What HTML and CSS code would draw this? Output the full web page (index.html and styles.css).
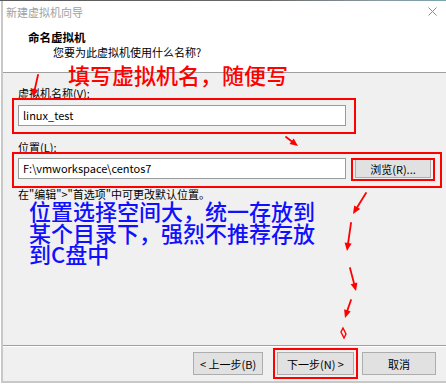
FILE: index.html
```html
<!DOCTYPE html>
<html lang="zh-CN">
<head>
<meta charset="utf-8">
<title>新建虚拟机向导</title>
<link rel="stylesheet" href="styles.css">
</head>
<body>
<div class="window">
  <div class="topstrip"></div>
  <div class="frame">
    <div class="titlebar">
      <span class="title">新建虚拟机向导</span>
      <svg class="close" width="9" height="9" viewBox="0 0 9 9"><path d="M0.5 0.5 L8.5 8.5 M8.5 0.5 L0.5 8.5" stroke="#8a8a8a" stroke-width="1" fill="none"/></svg>
    </div>
    <div class="header">
      <div class="h-title">命名虚拟机</div>
      <div class="h-sub">您要为此虚拟机使用什么名称?</div>
    </div>
    <div class="content">
      <div class="label">虚拟机名称(V):</div>
      <div class="input name">linux_test</div>
      <div class="label loc">位置(L):</div>
      <div class="row">
        <div class="input path">F:\vmworkspace\centos7</div>
        <div class="btn browse">浏览(R)...</div>
      </div>
      <div class="note">在"编辑">"首选项"中可更改默认位置。</div>
      <div class="blue">
        <div class="blue-line">位置选择空间大，统一存放到</div>
        <div class="blue-line">某个目录下，强烈不推荐存放</div>
        <div class="blue-line">到C盘中</div>
      </div>
    </div>
    <div class="footer">
      <div class="btn prev">&lt; 上一步(B)</div>
      <div class="btn next">下一步(N) &gt;</div>
      <div class="btn cancel">取消</div>
    </div>
  </div>
  <div class="red-text">填写虚拟机名，随便写</div>
  <div class="mark mark-name"></div>
  <div class="mark mark-path"></div>
  <div class="mark mark-browse"></div>
  <div class="mark mark-next"></div>
  <svg class="arrows" width="446" height="384" viewBox="0 0 446 384">
    <g stroke="#ff0000" stroke-width="1.8" stroke-linecap="round" fill="none">
      <line x1="38" y1="75" x2="34.8" y2="89.2"/>
      <line x1="286" y1="137" x2="291.6" y2="141.2"/>
      <line x1="366" y1="193" x2="357.2" y2="207.2"/>
      <line x1="351" y1="223" x2="348.1" y2="243.1"/>
      <line x1="350" y1="268" x2="354" y2="283.3"/>
      <line x1="351" y1="300" x2="347.4" y2="310.4"/>
      <polygon points="343,328 346,334 344,338 341,332" stroke-width="1.4"/>
    </g>
    <g fill="#ff0000">
      <polygon points="33,97 38.2,90 31.4,88.4"/>
      <polygon points="298,146 289.5,144 293.7,138.4"/>
      <polygon points="353,214 360.2,209 354.2,205.4"/>
      <polygon points="347,251 351.6,243.6 344.6,242.6"/>
      <polygon points="356,291 357.4,282.4 350.6,284.2"/>
      <polygon points="345,318 350.7,311.5 344.1,309.3"/>
    </g>
  </svg>
</div>
</body>
</html>
```

FILE: styles.css
```css
* { box-sizing: border-box; }
html, body { margin: 0; padding: 0; background: #ffffff; }
body {
  font-family: "Noto Sans CJK SC", "Noto Sans", sans-serif;
  font-size: 11px;
  color: #000;
}
.window {
  position: relative;
  width: 446px;
  height: 384px;
  overflow: hidden;
}
.topstrip {
  height: 1px;
  background: linear-gradient(90deg, #5a5a5a 0%, #6a6a6a 60%, #8a9aa0 85%, #7aa4b0 100%);
}
.frame {
  margin-left: 1px;
  border-left: 2px solid #c8c8c8;
}
.titlebar {
  height: 23px;
  display: flex;
  align-items: center;
  justify-content: space-between;
  padding: 0 9px 0 3px;
  background: #fff;
}
.title {
  color: #a0a0a0;
  line-height: 23px;
}
.close { display: block; margin-top: -2px; }
.header {
  height: 49px;
  background: #fff;
  border-bottom: 1px solid #a0a0a0;
  padding: 5px 0 0 25px;
}
.h-title { font-weight: bold; font-size: 11.5px; line-height: 16px; }
.h-sub { line-height: 16px; margin-top: -1px; padding-left: 25px; }
.content {
  height: 272px;
  background: #f0f0f0;
  padding: 12px 0 0 15px;
}
.label { line-height: 16px; height: 16px; }
.label.loc { margin-top: 13px; }
.input {
  width: 328px;
  height: 21px;
  background: #fff;
  border: 1px solid #9a9a9a;
  padding-left: 4px;
  line-height: 19px;
  white-space: nowrap;
}
.input.name { margin-top: 4px; }
.row {
  display: flex;
  align-items: center;
  margin-top: 3px;
}
.btn {
  height: 23px;
  background: #e1e1e1;
  border: 1px solid #adadad;
  display: flex;
  align-items: center;
  justify-content: center;
  white-space: nowrap;
}
.browse {
  width: 76px;
  height: 19px;
  margin-left: 9px;
}
.note {
  margin-top: 7px;
  line-height: 16px;
  height: 16px;
  white-space: nowrap;
}
.blue {
  margin-top: -2px;
  padding-left: 11px;
  font-size: 22px;
  color: #1010ff;
  font-weight: 500;
  white-space: nowrap;
}
.blue-line {
  height: 21.5px;
  line-height: 21.5px;
}
.footer {
  height: 38px;
  background: #f0f0f0;
  border-top: 1px solid #a0a0a0;
  border-bottom: 2px solid #c8c8c8;
  box-shadow: inset 0 1px 0 #ffffff;
  display: flex;
  justify-content: flex-end;
  align-items: flex-start;
  padding: 6px 10px 0 0;
}
.prev { width: 70px; }
.next { width: 77px; margin-left: 14px; }
.cancel { width: 74px; margin-left: 8px; }
.red-text {
  position: absolute;
  left: 68px;
  top: 63px;
  font-size: 22px;
  line-height: 22px;
  color: #ff0000;
  font-weight: 500;
  white-space: nowrap;
}
.mark {
  position: absolute;
  border: 2px solid #ff0000;
}
.mark-name { left: 12px; top: 98px; width: 344px; height: 36px; }
.mark-path { left: 12px; top: 152px; width: 430px; height: 36px; }
.mark-browse { left: 351px; top: 158px; width: 84px; height: 23px; }
.mark-next { left: 273px; top: 348px; width: 85px; height: 31px; }
.arrows {
  position: absolute;
  left: 0;
  top: 0;
}
```
